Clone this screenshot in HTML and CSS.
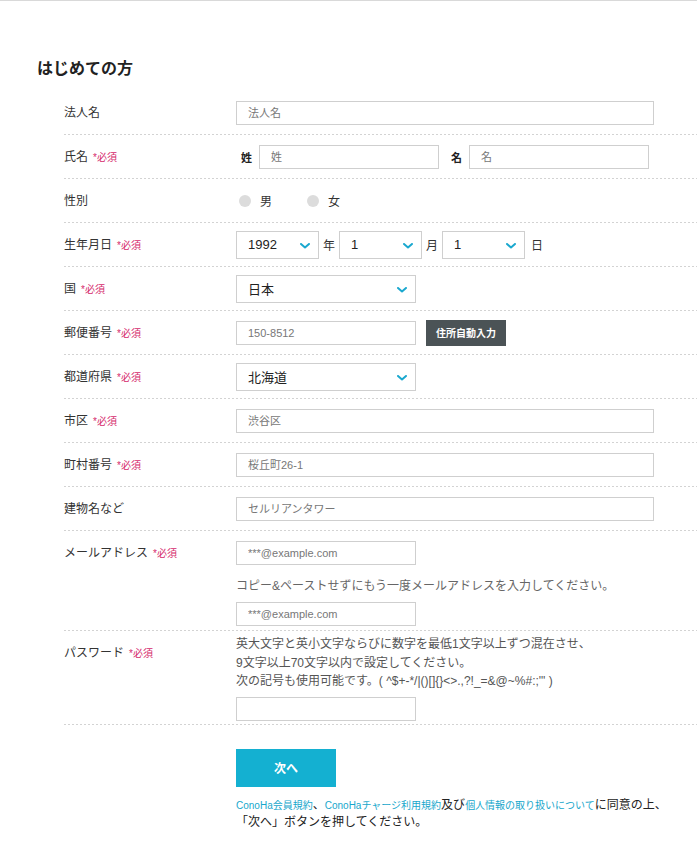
FILE: index.html
```html
<!DOCTYPE html>
<html lang="ja">
<head>
<meta charset="utf-8">
<title>はじめての方</title>
<link rel="stylesheet" href="styles.css">
</head>
<body>
<main class="page">
  <h1 class="title">はじめての方</h1>
  <form class="form">
    <div class="row">
      <div class="label">法人名</div>
      <div class="field"><input class="input full" placeholder="法人名"></div>
    </div>
    <div class="row">
      <div class="label">氏名<span class="req">*必須</span></div>
      <div class="field">
        <span class="sub">姓</span><input class="input short" placeholder="姓">
        <span class="sub sub2">名</span><input class="input short" placeholder="名">
      </div>
    </div>
    <div class="row">
      <div class="label">性別</div>
      <div class="field">
        <label class="radio"><span class="dot"></span>男</label>
        <label class="radio"><span class="dot"></span>女</label>
      </div>
    </div>
    <div class="row">
      <div class="label">生年月日<span class="req">*必須</span></div>
      <div class="field">
        <div class="select sm"><span>1992</span><svg class="chev" viewBox="0 0 10 6"><path d="M1 1l4 3.5L9 1"/></svg></div>
        <span class="unit">年</span>
        <div class="select sm"><span>1</span><svg class="chev" viewBox="0 0 10 6"><path d="M1 1l4 3.5L9 1"/></svg></div>
        <span class="unit">月</span>
        <div class="select sm"><span>1</span><svg class="chev" viewBox="0 0 10 6"><path d="M1 1l4 3.5L9 1"/></svg></div>
        <span class="unit unit-last">日</span>
      </div>
    </div>
    <div class="row">
      <div class="label">国<span class="req">*必須</span></div>
      <div class="field">
        <div class="select md"><span>日本</span><svg class="chev" viewBox="0 0 10 6"><path d="M1 1l4 3.5L9 1"/></svg></div>
      </div>
    </div>
    <div class="row">
      <div class="label">郵便番号<span class="req">*必須</span></div>
      <div class="field">
        <input class="input short" placeholder="150-8512">
        <button type="button" class="zip-btn">住所自動入力</button>
      </div>
    </div>
    <div class="row">
      <div class="label">都道府県<span class="req">*必須</span></div>
      <div class="field">
        <div class="select md"><span>北海道</span><svg class="chev" viewBox="0 0 10 6"><path d="M1 1l4 3.5L9 1"/></svg></div>
      </div>
    </div>
    <div class="row">
      <div class="label">市区<span class="req">*必須</span></div>
      <div class="field"><input class="input full" placeholder="渋谷区"></div>
    </div>
    <div class="row">
      <div class="label">町村番号<span class="req">*必須</span></div>
      <div class="field"><input class="input full" placeholder="桜丘町26-1"></div>
    </div>
    <div class="row">
      <div class="label">建物名など</div>
      <div class="field"><input class="input full" placeholder="セルリアンタワー"></div>
    </div>
    <div class="row">
      <div class="label">メールアドレス<span class="req">*必須</span></div>
      <div class="field stack email">
        <input class="input short" placeholder="***@example.com">
        <p class="note">コピー&amp;ペーストせずにもう一度メールアドレスを入力してください。</p>
        <input class="input short" placeholder="***@example.com">
      </div>
    </div>
    <div class="row">
      <div class="label">パスワード<span class="req">*必須</span></div>
      <div class="field stack pass">
        <p class="pw-note">英大文字と英小文字ならびに数字を最低1文字以上ずつ混在させ、<br>9文字以上70文字以内で設定してください。<br>次の記号も使用可能です。( ^$+-*/|()[]{}&lt;&gt;.,?!_=&amp;@~%#:;'" )</p>
        <input class="input short" type="password">
      </div>
    </div>
    <div class="actions">
      <button type="button" class="next">次へ</button>
      <p class="agree"><a href="#">ConoHa会員規約</a>、<a href="#">ConoHaチャージ利用規約</a>及び<a href="#">個人情報の取り扱いについて</a>に同意の上、<br>「次へ」ボタンを押してください。</p>
    </div>
  </form>
</main>
</body>
</html>
```
FILE: styles.css
```css
* { box-sizing: border-box; }
html, body { margin: 0; padding: 0; }
body {
  border-top: 1px solid #d9d9d9;
  background: #fff;
  color: #333;
  font-family: "Liberation Sans", "Noto Sans CJK JP", sans-serif;
  font-size: 12px;
}
.page { padding-left: 37px; }
.title {
  margin: 56px 0 10px;
  font-size: 16px;
  line-height: 24px;
  font-weight: bold;
  color: #222;
}
.form { margin-left: 27px; }
.row {
  display: flex;
  padding-bottom: 1px;
  background-image: linear-gradient(to right, #d3d3d3 50%, transparent 50%);
  background-size: 4px 1px;
  background-repeat: repeat-x;
  background-position: left bottom;
}
.label {
  width: 172px;
  flex: none;
  padding-top: 13px;
  line-height: 18px;
  font-size: 12px;
  color: #333;
}
.req {
  margin-left: 5px;
  font-size: 10px;
  color: #d52a6c;
}
.field {
  flex: 1;
  min-height: 43px;
  display: flex;
  align-items: center;
}
.input {
  height: 24px;
  border: 1px solid #cfcfcf;
  border-radius: 0;
  padding: 0 11px;
  font-family: inherit;
  font-size: 11px;
  color: #444;
  background: #fff;
  outline: none;
}
.input::placeholder { color: #777; }
.full { width: 418px; }
.short { width: 180px; }
.sub {
  margin: 0 7px 0 5px;
  font-size: 11px;
  font-weight: bold;
  color: #222;
}
.sub2 { margin-left: 12px; }
.radio {
  display: flex;
  align-items: center;
  font-size: 12px;
  color: #333;
  margin-right: 35px;
}
.radio:first-child { margin-left: 3px; }
.dot {
  width: 12px;
  height: 12px;
  border-radius: 50%;
  background: #dcdcdc;
  margin-right: 9px;
}
.select {
  position: relative;
  height: 28px;
  border: 1px solid #cfcfcf;
  display: flex;
  align-items: center;
  padding-left: 11px;
  font-size: 13px;
  color: #222;
  background: #fff;
}
.select.sm { width: 83px; }
.select.md { width: 180px; }
.chev {
  position: absolute;
  right: 8px;
  top: 11px;
  width: 10px;
  height: 6px;
  fill: none;
  stroke: #1aa8cf;
  stroke-width: 2;
  stroke-linecap: round;
  stroke-linejoin: round;
}
.unit {
  margin: 0 4px;
  font-size: 12px;
  color: #333;
}
.unit-last { margin-left: 6px; }
.zip-btn {
  margin-left: 10px;
  width: 80px;
  height: 26px;
  border: 0;
  background: #4b5356;
  color: #fff;
  font-family: inherit;
  font-size: 10px;
  font-weight: bold;
  padding: 0;
}
.stack {
  flex-direction: column;
  align-items: flex-start;
}
.email { padding: 10px 0 4px; }
.note {
  margin: 12px 0 7px;
  line-height: 18px;
  font-size: 12px;
  color: #666;
}
.pass { padding: 4px 0 3px; }
.pw-note {
  margin: 0 0 6px;
  line-height: 18.5px;
  font-size: 12px;
  color: #555;
}
.actions { padding: 24px 0 0 172px; }
.next {
  width: 100px;
  height: 38px;
  border: 0;
  background: #14b0d1;
  color: #fff;
  font-family: inherit;
  font-size: 12px;
  font-weight: bold;
  padding: 0;
}
.agree {
  margin: 10px 0 0;
  line-height: 16px;
  font-size: 12px;
  color: #222;
}
.agree a {
  color: #17a7cc;
  font-size: 10px;
  text-decoration: none;
}
```
